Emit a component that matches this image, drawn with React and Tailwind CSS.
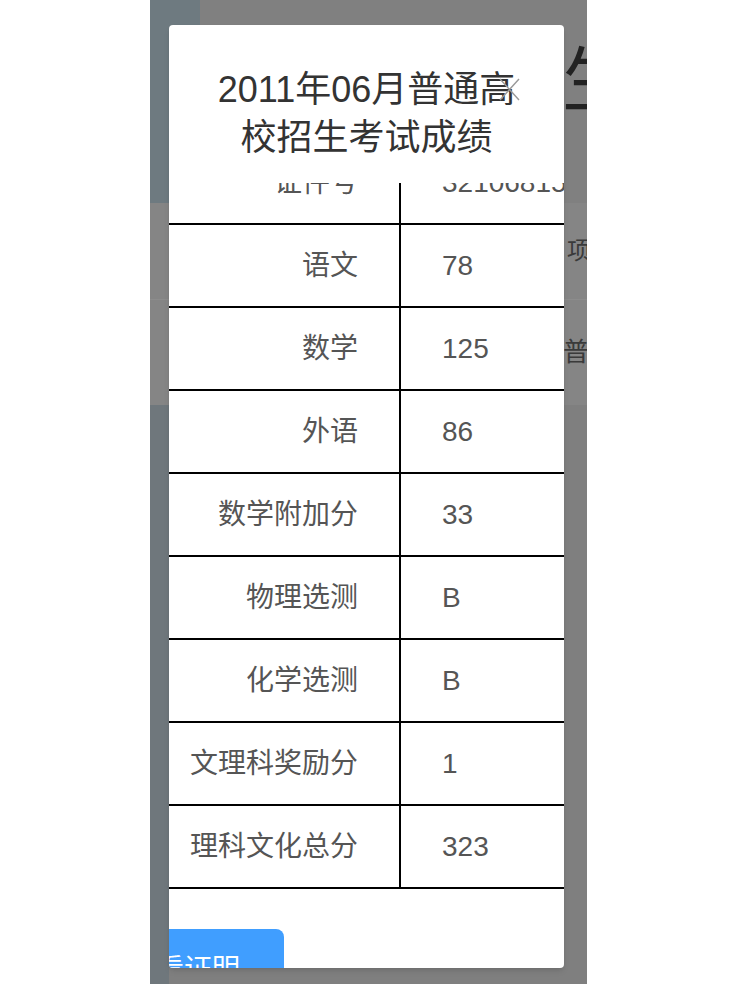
import React from "react";

const rows = [
  { label: "证件号", value: "321068151234567890" },
  { label: "语文", value: "78" },
  { label: "数学", value: "125" },
  { label: "外语", value: "86" },
  { label: "数学附加分", value: "33" },
  { label: "物理选测", value: "B" },
  { label: "化学选测", value: "B" },
  { label: "文理科奖励分", value: "1" },
  { label: "理科文化总分", value: "323" },
];

function Backdrop() {
  return (
    <div className="absolute inset-0 flex flex-col">
      <div className="flex h-[203px]">
        <div className="w-[50px] bg-[#6e7a80]"></div>
        <div className="flex-1 bg-[#808080] overflow-hidden">
          <div className="pl-[362px] pt-[44px] text-[72px] leading-none text-[#222] whitespace-nowrap">
            生
          </div>
        </div>
      </div>
      <div className="h-[202px] bg-[#858585] flex flex-col">
        <div className="h-[97px] border-b border-[#8c8c8c] flex items-center pl-[417px] text-[24px] text-[#3a3a3a] overflow-hidden whitespace-nowrap">
          项目
        </div>
        <div className="flex-1 flex items-center pl-[413px] text-[26px] text-[#3a3a3a] overflow-hidden whitespace-nowrap">
          普通
        </div>
      </div>
      <div className="flex-1 flex">
        <div className="w-[19px] bg-[#6f777c]"></div>
        <div className="flex-1 bg-[#7f7f7f]"></div>
      </div>
    </div>
  );
}

export default function App() {
  return (
    <div
      className="w-[738px] h-[984px] bg-white flex"
      style={{ fontFamily: '"Liberation Sans", "Noto Sans CJK SC", sans-serif' }}
    >
      <div className="ml-[150px] w-[437px] h-[984px] relative overflow-hidden">
        <Backdrop />

        <div className="absolute left-[19px] top-[25px] w-[395px] h-[943px] bg-white rounded-[4px] overflow-hidden shadow-md flex flex-col">
          <div className="relative h-[158px] shrink-0 pt-[41px] text-center text-[36px] leading-[48px] text-[#333]">
            2011年06月普通高
            <br />
            校招生考试成绩
            <svg
              className="absolute left-[330px] top-[53px]"
              width="21"
              height="23"
              viewBox="0 0 21 23"
            >
              <path d="M1 1L20 22M20 1L1 22" stroke="#9a9a9a" strokeWidth="1.4" fill="none" />
            </svg>
          </div>

          <div className="h-[706px] shrink-0 overflow-hidden">
            <div className="-mt-[41px] w-[500px]">
              {rows.map((row) => (
                <div key={row.label} className="flex h-[83px] border-b-2 border-black text-[28px] text-[#555]">
                  <div className="w-[232px] shrink-0 border-r-2 border-black flex items-center justify-end pr-[41px] whitespace-nowrap">
                    {row.label}
                  </div>
                  <div className="flex-1 flex items-center pl-[41px] whitespace-nowrap">{row.value}</div>
                </div>
              ))}
            </div>
          </div>

          <div className="h-[40px] shrink-0"></div>
          <div className="flex">
            <div className="-ml-[60px] w-[175px] h-[76px] bg-[#409eff] rounded-tr-lg flex justify-end items-start pt-[27px] pr-[44px] text-[28px] leading-[28px] text-white whitespace-nowrap">
              查看证明
            </div>
          </div>
        </div>
      </div>
    </div>
  );
}
